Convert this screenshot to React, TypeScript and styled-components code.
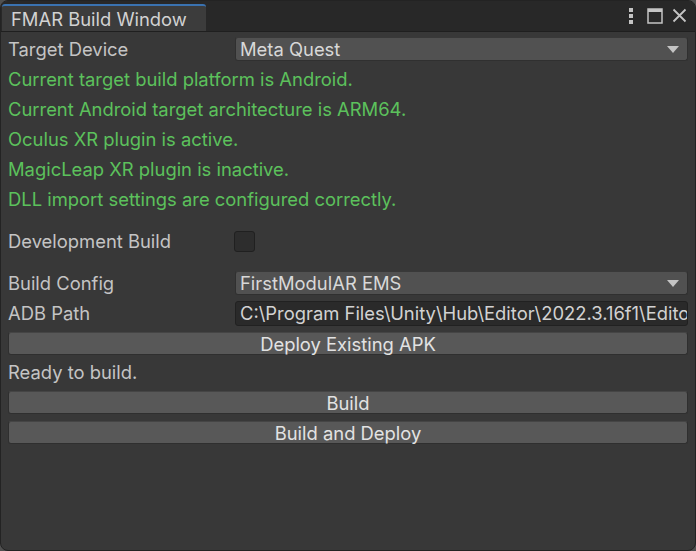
import React from "react";
import styled, { createGlobalStyle } from "styled-components";

const GlobalStyle = createGlobalStyle`
  html, body {
    margin: 0;
    padding: 0;
    background: #505050;
  }
  * {
    box-sizing: border-box;
  }
`;

const Window = styled.div`
  width: 696px;
  height: 551px;
  background: #383838;
  border-radius: 8px;
  border: 1px solid #232323;
  overflow: hidden;
  display: flex;
  flex-direction: column;
  font-family: Inter, "Noto Sans", sans-serif;
  font-size: 18.4px;
  color: #c4c4c4;
`;

const TitleBar = styled.div`
  height: 31px;
  flex-shrink: 0;
  background: #282828;
  border-bottom: 1px solid #1f1f1f;
  display: flex;
  align-items: flex-end;
  justify-content: space-between;
  padding-left: 1px;
`;

const Tab = styled.div`
  width: 204px;
  height: 27px;
  background: #3c3c3c;
  border-top: 2px solid #3a72b0;
  border-radius: 3px 3px 0 0;
  padding-left: 9px;
  display: flex;
  align-items: center;
  color: #d2d2d2;
`;

const WindowIcons = styled.div`
  display: flex;
  align-items: center;
  height: 31px;
  padding-right: 8px;
`;

const IconSlot = styled.span<{ $gap: number }>`
  display: flex;
  margin-left: ${({ $gap }) => $gap}px;
`;

const Content = styled.div`
  display: flex;
  flex-direction: column;
  padding: 2px 7px 0 7px;
`;

const Row = styled.div<{ $gap?: number }>`
  height: 30px;
  display: flex;
  align-items: center;
  margin-top: ${({ $gap }) => $gap ?? 0}px;
`;

const Label = styled.div`
  width: 227px;
  flex-shrink: 0;
  white-space: nowrap;
`;

const Message = styled.div<{ $ok?: boolean }>`
  height: 30px;
  display: flex;
  align-items: center;
  white-space: nowrap;
  color: ${({ $ok }) => ($ok ? "#5cc15c" : "#c4c4c4")};
  margin-top: ${({ $ok }) => ($ok ? 0 : 2)}px;
`;

const Dropdown = styled.div`
  flex: 1;
  height: 24px;
  background: #515151;
  border: 1px solid #303030;
  border-top-color: #393939;
  border-radius: 3px;
  display: flex;
  align-items: center;
  justify-content: space-between;
  padding: 0 8px 0 4px;
  color: #d8d8d8;
`;

const Arrow = styled.span`
  width: 0;
  height: 0;
  border-left: 6px solid transparent;
  border-right: 6px solid transparent;
  border-top: 7px solid #c4c4c4;
`;

const TextField = styled.div`
  flex: 1;
  min-width: 0;
  height: 25px;
  background: #2a2a2a;
  border: 1px solid #212121;
  border-radius: 3px;
  padding: 0 4px;
  display: flex;
  align-items: center;
  overflow: hidden;
  white-space: nowrap;
  color: #d2d2d2;
`;

const Checkbox = styled.div`
  width: 21px;
  height: 21px;
  background: #2d2d2d;
  border: 1px solid #202020;
  border-radius: 3px;
  margin-left: -1px;
`;

const Button = styled.div<{ $top: number }>`
  height: 23px;
  margin-top: ${({ $top }) => $top}px;
  background: #585858;
  border: 1px solid #2f2f2f;
  border-top-color: #454545;
  border-radius: 3px;
  display: flex;
  align-items: center;
  justify-content: center;
  color: #e2e2e2;
`;

const messages = [
  "Current target build platform is Android.",
  "Current Android target architecture is ARM64.",
  "Oculus XR plugin is active.",
  "MagicLeap XR plugin is inactive.",
  "DLL import settings are configured correctly.",
];

function KebabIcon() {
  return (
    <svg width="6" height="16" viewBox="0 0 6 16">
      <rect x="1" y="0" width="4" height="4" fill="#c4c4c4" />
      <rect x="1" y="6" width="4" height="4" fill="#c4c4c4" />
      <rect x="1" y="12" width="4" height="4" fill="#c4c4c4" />
    </svg>
  );
}

function MaximizeIcon() {
  return (
    <svg width="16" height="16" viewBox="0 0 16 16">
      <rect x="1" y="1" width="14" height="14" fill="none" stroke="#c4c4c4" strokeWidth="1.5" />
      <rect x="1" y="1" width="14" height="3" fill="#c4c4c4" />
    </svg>
  );
}

function CloseIcon() {
  return (
    <svg width="15" height="15" viewBox="0 0 15 15">
      <path d="M1.5 1.5 L13.5 13.5 M13.5 1.5 L1.5 13.5" stroke="#c4c4c4" strokeWidth="1.8" />
    </svg>
  );
}

export default function App() {
  return (
    <>
      <GlobalStyle />
      <Window>
        <TitleBar>
          <Tab>FMAR Build Window</Tab>
          <WindowIcons>
            <IconSlot $gap={0}>
              <KebabIcon />
            </IconSlot>
            <IconSlot $gap={13}>
              <MaximizeIcon />
            </IconSlot>
            <IconSlot $gap={9}>
              <CloseIcon />
            </IconSlot>
          </WindowIcons>
        </TitleBar>
        <Content>
          <Row>
            <Label>Target Device</Label>
            <Dropdown>
              <span>Meta Quest</span>
              <Arrow />
            </Dropdown>
          </Row>
          {messages.map((m) => (
            <Message key={m} $ok>
              {m}
            </Message>
          ))}
          <Row $gap={12}>
            <Label>Development Build</Label>
            <Checkbox />
          </Row>
          <Row $gap={12}>
            <Label>Build Config</Label>
            <Dropdown>
              <span>FirstModulAR EMS</span>
              <Arrow />
            </Dropdown>
          </Row>
          <Row>
            <Label>ADB Path</Label>
            <TextField>C:\Program Files\Unity\Hub\Editor\2022.3.16f1\Editor</TextField>
          </Row>
          <Button $top={4}>Deploy Existing APK</Button>
          <Message>Ready to build.</Message>
          <Button $top={4}>Build</Button>
          <Button $top={7}>Build and Deploy</Button>
        </Content>
      </Window>
    </>
  );
}
